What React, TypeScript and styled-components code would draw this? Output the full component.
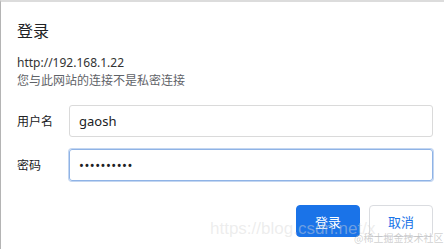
import styled, { createGlobalStyle } from 'styled-components'

const GlobalStyle = createGlobalStyle`
  html, body {
    margin: 0;
    padding: 0;
    background: #fff;
  }
  body {
    font-family: "Noto Sans", "Noto Sans CJK SC", sans-serif;
  }
`

const Dialog = styled.div`
  position: relative;
  box-sizing: border-box;
  width: 444px;
  height: 249px;
  border-top: 2px solid #dcdcdc;
  border-left: 1px solid #b4b4b4;
  padding: 19px 11px 0 16px;
  overflow: hidden;
  &::before {
    content: '';
    position: absolute;
    left: -1px;
    top: 12px;
    width: 1px;
    height: 12px;
    background: #e9a66b;
  }
`

const Title = styled.h1`
  margin: 0;
  font-size: 16px;
  line-height: 20px;
  font-weight: 400;
  color: #202124;
`

const Origin = styled.div`
  margin-top: 14px;
  font-size: 12px;
  line-height: 16px;
  color: #333;
`

const Warning = styled.div`
  margin-top: 2px;
  font-size: 12px;
  line-height: 16px;
  color: #5f6368;
`

const Form = styled.div`
  margin-top: 16px;
  display: flex;
  flex-direction: column;
  gap: 12px;
`

const Row = styled.div`
  display: flex;
  align-items: center;
`

const Label = styled.label`
  width: 52px;
  flex-shrink: 0;
  font-size: 12px;
  color: #202124;
`

const Input = styled.div<{ $focused?: boolean }>`
  box-sizing: border-box;
  flex: 1;
  height: 32px;
  display: flex;
  align-items: center;
  padding-left: 9px;
  border: 1px solid ${(p) => (p.$focused ? '#8fb3e6' : '#dadada')};
  box-shadow: ${(p) => (p.$focused ? '0 0 0 1px #c3d6f1' : 'none')};
  border-radius: 3px;
  font-size: 13px;
  color: #202124;
`

const Dots = styled.span`
  font-size: 13px;
  letter-spacing: 0.5px;
  color: #202124;
`

const Actions = styled.div`
  margin-top: 24px;
  display: flex;
  justify-content: flex-end;
  gap: 9px;
`

const Button = styled.button<{ $primary?: boolean }>`
  box-sizing: border-box;
  width: 64px;
  height: 32px;
  border-radius: 4px;
  font-family: "Noto Sans CJK SC", sans-serif;
  font-size: 13px;
  cursor: pointer;
  background: ${(p) => (p.$primary ? '#1a73e8' : '#fff')};
  color: ${(p) => (p.$primary ? '#fff' : '#1a73e8')};
  border: 1px solid ${(p) => (p.$primary ? '#1a73e8' : '#dadce0')};
`

const Watermark = styled.div`
  position: absolute;
  left: 209px;
  top: 217px;
  font-family: "Liberation Sans", sans-serif;
  font-size: 17px;
  color: rgba(215, 215, 215, 0.45);
  white-space: nowrap;
  pointer-events: none;
`

const WatermarkTag = styled.div`
  position: absolute;
  left: 353px;
  top: 228px;
  font-family: "Noto Sans CJK SC", sans-serif;
  font-size: 10px;
  color: rgba(170, 170, 170, 0.55);
  white-space: nowrap;
  pointer-events: none;
`

export default function App() {
  return (
    <>
      <GlobalStyle />
      <Dialog>
        <Title>登录</Title>
        <Origin>http://192.168.1.22</Origin>
        <Warning>您与此网站的连接不是私密连接</Warning>
        <Form>
          <Row>
            <Label>用户名</Label>
            <Input>gaosh</Input>
          </Row>
          <Row>
            <Label>密码</Label>
            <Input $focused>
              <Dots>••••••••••</Dots>
            </Input>
          </Row>
        </Form>
        <Actions>
          <Button $primary>登录</Button>
          <Button>取消</Button>
        </Actions>
        <Watermark>https://blog.csdn.net/x</Watermark>
        <WatermarkTag>@稀土掘金技术社区</WatermarkTag>
      </Dialog>
    </>
  )
}
